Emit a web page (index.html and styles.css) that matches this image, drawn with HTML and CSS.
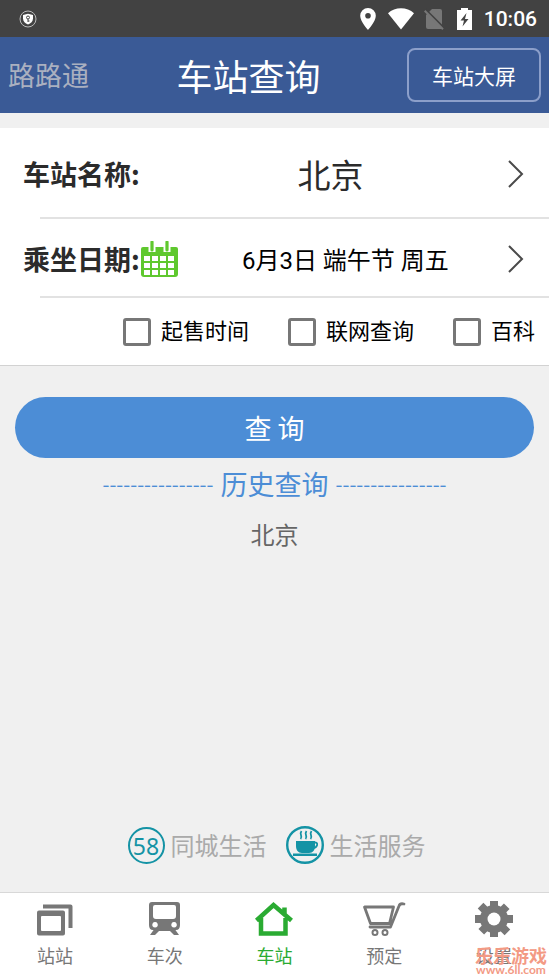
FILE: index.html
```html
<!DOCTYPE html>
<html lang="zh-CN">
<head>
<meta charset="utf-8">
<meta name="viewport" content="width=device-width, initial-scale=1">
<title>车站查询</title>
<link rel="stylesheet" href="styles.css">
</head>
<body>
<div class="status">
  <svg class="shield" width="18" height="18" viewBox="0 0 18 18"><circle cx="9" cy="9" r="8" fill="none" stroke="#bbb"/><path d="M9 3.800 14 5v3.500c0 3-2.200 5-5 6-2.800-1-5-3-5-6V5z" fill="#fff"/><circle cx="9" cy="7.500" r="1.500" fill="none" stroke="#444"/><path d="M9 9v3M9 11h1.500" stroke="#444"/></svg>
  <div class="status-right">
    <svg width="16" height="22" viewBox="0 0 16 22"><path fill="#fff" fill-rule="evenodd" d="M8 0a7.800 7.800 0 0 0-7.800 7.800C.2 13.500 8 22 8 22s7.800-8.500 7.800-14.200A7.800 7.800 0 0 0 8 0zm0 5a2.800 2.800 0 1 1 0 5.600A2.800 2.800 0 0 1 8 5z"/></svg>
    <svg width="26" height="22" viewBox="0 0 26 22"><path fill="#fff" d="M0 5.200C7-1.400 19-1.400 26 5.200L13 21.500z"/></svg>
    <svg class="sim" width="20" height="22" viewBox="0 0 20 22"><path fill="#777" d="M8 1h8q2 0 2 2v18H4q-2 0-2-2V7z"/><path d="M1.500 1.500 20 20" stroke="#424242" stroke-width="2"/><path d="M.7 2.700 19 21.300" stroke="#777" stroke-width="2"/></svg>
    <svg width="15" height="22" viewBox="0 0 15 22"><path fill="#fff" d="M4 0h7v2h4v20H0V2h4z"/><path fill="#444" d="M9.500 5 3.500 12.500H7L5.500 18.500 11.500 11H8z"/></svg>
    <span class="clock">10:06</span>
  </div>
</div>
<header class="header">
  <a class="brand" href="#">路路通</a>
  <h1 class="title">车站查询</h1>
  <button class="screen-btn" type="button">车站大屏</button>
</header>
<main class="main">
  <form class="card">
    <div class="row row-station">
      <span class="label">车站名称:</span>
      <button class="value value-station" type="button">北京</button>
      <svg class="chevron" width="18" height="28" viewBox="0 0 18 28"><path d="M2 1 15 14 2 27"/></svg>
    </div>
    <div class="row row-date">
      <span class="label">乘坐日期:</span>
      <svg class="calendar" width="38" height="36" viewBox="0 0 38 36"><path fill="#5fc82e" d="M3 6h33q2 0 2 2v25q0 3-3 3H4q-3 0-3-3V8q0-2 2-2z"/><path fill="#fff" d="M8.500 5h7v6h-7zM23.500 5h7v6h-7z"/><path d="M12 1v8M27 1v8" stroke="#5fc82e" stroke-width="3.200" stroke-linecap="round"/><g fill="#fff"><path id="cells" d="M4 15h6v5H4zM12 15h6v5h-6zM20 15h6v5h-6zM28 15h6v5h-6z"/><use href="#cells" y="7"/><use href="#cells" y="14"/></g></svg>
      <button class="value value-date" type="button">6月3日 端午节 周五</button>
      <svg class="chevron" width="18" height="28" viewBox="0 0 18 28"><path d="M2 1 15 14 2 27"/></svg>
    </div>
    <div class="options">
      <label class="option"><input type="checkbox">起售时间</label>
      <label class="option"><input type="checkbox">联网查询</label>
      <label class="option"><input type="checkbox">百科</label>
    </div>
  </form>
  <button class="search" type="button">查 询</button>
  <h2 class="history-title"><span class="dashes">----------------</span>历史查询<span class="dashes">----------------</span></h2>
  <a class="history-item" href="#">北京</a>
  <div class="services">
    <a class="service" href="#"><span class="badge">58</span>同城生活</a>
    <a class="service" href="#">
      <svg width="38" height="38" viewBox="0 0 38 38" fill="none" stroke="#1493a5"><circle cx="19" cy="19" r="17.800" stroke-width="2.400"/><path fill="#1493a5" stroke="none" d="M10 15h19v5c0 4-2 7-6 7h-7c-4 0-6-3-6-7zM7 27.500h24v2.500H7z"/><path stroke-width="1.800" d="M28 16.500c5-1 4 6-2 5.500M14.500 13c3-3-2-4 1-8M19.500 13c3-3-2-4 1-8M24.500 13c3-3-2-4 1-8"/></svg>生活服务</a>
  </div>
</main>
<nav class="tabs">
  <a class="tab" href="#">
    <svg width="42" height="38" viewBox="0 0 42 38"><path d="M9 6.500h27.500V28" fill="none" stroke="#777" stroke-width="4" stroke-linejoin="round"/><path fill="#777" fill-rule="evenodd" d="M5 10.500h24q2 0 2 2v21q0 2-2 2H5q-2 0-2-2v-21q0-2 2-2zm3 5.500q-1 0-1 1v13q0 1 1 1h18q1 0 1-1V17q0-1-1-1z"/></svg>
    <span>站站</span></a>
  <a class="tab" href="#">
    <svg width="42" height="38" viewBox="0 0 42 38"><path fill="#777" fill-rule="evenodd" d="M8 2h25q3 0 3 3v20q0 5-4 5H9q-4 0-4-5V5q0-3 3-3zm3 3q-2 0-2 2v9q0 3 3 3h17q3 0 3-3V7q0-2-2-2zm0 17a2.800 2.800 0 1 0 .1 0zm19 0a2.800 2.800 0 1 0 .1 0z"/><path fill="#777" d="M11 28 6 35h5l4-4h11l4 4h5l-5-7z"/></svg>
    <span>车次</span></a>
  <a class="tab tab-on" href="#" aria-current="page">
    <svg width="42" height="38" viewBox="0 0 42 38"><path d="M3.500 20.500 20.500 5l18 15.500M8 18v15.500h24.500V18M31.500 14V7.500" fill="none" stroke="#2aab32" stroke-width="4.500"/></svg>
    <span>车站</span></a>
  <a class="tab" href="#">
    <svg width="46" height="38" viewBox="0 0 46 38" fill="none" stroke="#777" stroke-width="2.800" stroke-linejoin="round" stroke-linecap="round"><path d="M3.500 7h29l-4 16.500H9.500zM43 4q-4-1-5 2l-8.500 21H9"/><circle cx="14" cy="32.500" r="2.500" stroke-width="2"/><circle cx="24" cy="32.500" r="2.500" stroke-width="2"/></svg>
    <span>预定</span></a>
  <a class="tab" href="#">
    <svg width="42" height="38" viewBox="0 0 42 38"><g fill="#777"><path d="M17 1h8v36h-8zM2 15h38v8H2z"/><path d="M17 1h8v36h-8zM2 15h38v8H2z" transform="rotate(45 21 19)"/><circle cx="21" cy="19" r="14"/></g><circle cx="21" cy="19" r="6.500" fill="#fff"/></svg>
    <span>设置</span></a>
  <div class="watermark"><span class="mark-name">乐乐游戏</span><span class="mark-url">www.6ll.com</span></div>
</nav>
</body>
</html>
```
FILE: styles.css
```css
* { box-sizing: border-box; }
body {
  margin: 0;
  min-height: 100vh;
  display: flex;
  flex-direction: column;
  background: #f0f0f0;
  color: #2b2b2b;
  font-family: Roboto, "Noto Sans CJK SC", sans-serif;
}
button { font: inherit; border: 0; padding: 0; background: none; }
a { color: inherit; text-decoration: none; }
svg { display: block; flex: none; }
.brand, .title, .label, .value-station, .search, .history-title, .history-item, .service, .watermark {
  font-family: "Noto Sans CJK SC", sans-serif;
}

.status {
  height: 37px;
  padding: 0 12px 0 19px;
  display: flex;
  align-items: center;
  justify-content: space-between;
  background: #424242;
}
.status-right { display: flex; align-items: center; gap: 12px; }
.sim { margin: 0 1px 0 -2px; }
.clock { color: #fff; font-size: 21px; font-weight: 500; line-height: 38px; }

.header {
  height: 76px;
  padding: 0 8px;
  display: grid;
  grid-template-columns: 82px 1fr 134px;
  align-items: center;
  background: #3a5a96;
}
.brand { color: #aab0c0; font-size: 27px; line-height: 38px; }
.title { margin: 0; color: #fff; font-size: 36px; font-weight: 400; line-height: 54px; text-align: center; }
.screen-btn {
  height: 54px;
  border: 2px solid #8c9fca;
  border-radius: 8px;
  color: #fff;
  font-size: 21px;
}

.main { flex: 1; display: flex; flex-direction: column; padding-top: 15px; }
.card { background: #fff; border-bottom: 1px solid #d2d2d2; }
.row { display: flex; align-items: center; padding: 0 24px 0 23px; position: relative; }
.row::after {
  content: "";
  position: absolute;
  left: 40px;
  right: 0;
  bottom: 0;
  height: 2px;
  background: #e2e2e2;
}
.row-station { height: 91px; }
.row-date { height: 79px; }
.label { font-size: 27px; font-weight: 700; line-height: 38px; white-space: nowrap; }
.value { flex: 1; text-align: center; white-space: nowrap; color: #2b2b2b; }
.value-station { font-size: 33px; line-height: 48px; padding-left: 14px; }
.value-date { font-size: 24px; padding-left: 6px; color: #000; }
.chevron path { fill: none; stroke: #4a4a4a; stroke-width: 2; }
.options {
  height: 67px;
  padding-right: 14px;
  display: flex;
  align-items: center;
  justify-content: flex-end;
  gap: 39px;
}
.option { display: flex; align-items: center; gap: 10px; color: #000; font-size: 22px; line-height: 34px; }
.option input {
  appearance: none;
  width: 28px;
  height: 28px;
  margin: 0;
  border: 3px solid #777;
  border-radius: 3px;
}
.option input:checked { background: #4c8dd6; }

.search {
  height: 61px;
  margin: 31px 15px 0;
  border-radius: 31px;
  background: #4c8dd6;
  color: #fff;
  font-size: 27px;
}
.history-title {
  margin: 6px 0 0;
  display: flex;
  justify-content: center;
  gap: 7px;
  color: #4c8dd6;
  font-size: 27px;
  font-weight: 400;
  line-height: 40px;
}
.dashes { font-size: 20px; }
.history-item { margin-top: 12px; text-align: center; color: #666; font-size: 24px; line-height: 36px; }
.services {
  margin-top: auto;
  padding: 0 0 28px 4px;
  display: flex;
  justify-content: center;
  gap: 19px;
}
.service { display: flex; align-items: center; gap: 6px; color: #aaa; font-size: 24px; line-height: 36px; }
.badge {
  width: 37px;
  height: 37px;
  border: 2px solid #1493a5;
  border-radius: 50%;
  color: #1493a5;
  font-family: "Noto Sans", sans-serif;
  font-size: 23px;
  line-height: 34px;
  text-align: center;
}

.tabs {
  position: relative;
  height: 85px;
  display: flex;
  background: #fff;
  border-top: 1px solid #d8d8d8;
}
.tab {
  flex: 1;
  padding-top: 7px;
  display: flex;
  flex-direction: column;
  align-items: center;
  gap: 5px;
  color: #777;
  font-size: 18px;
  line-height: 27px;
}
.tab-on { color: #2aab32; }
.watermark {
  position: absolute;
  right: 2px;
  bottom: 1px;
  display: flex;
  flex-direction: column;
  align-items: center;
  color: #f39a84;
  font-weight: 700;
}
.mark-name { font-size: 18px; line-height: 18px; }
.mark-url { font-family: Lato, sans-serif; font-size: 12px; line-height: 12px; }
```
